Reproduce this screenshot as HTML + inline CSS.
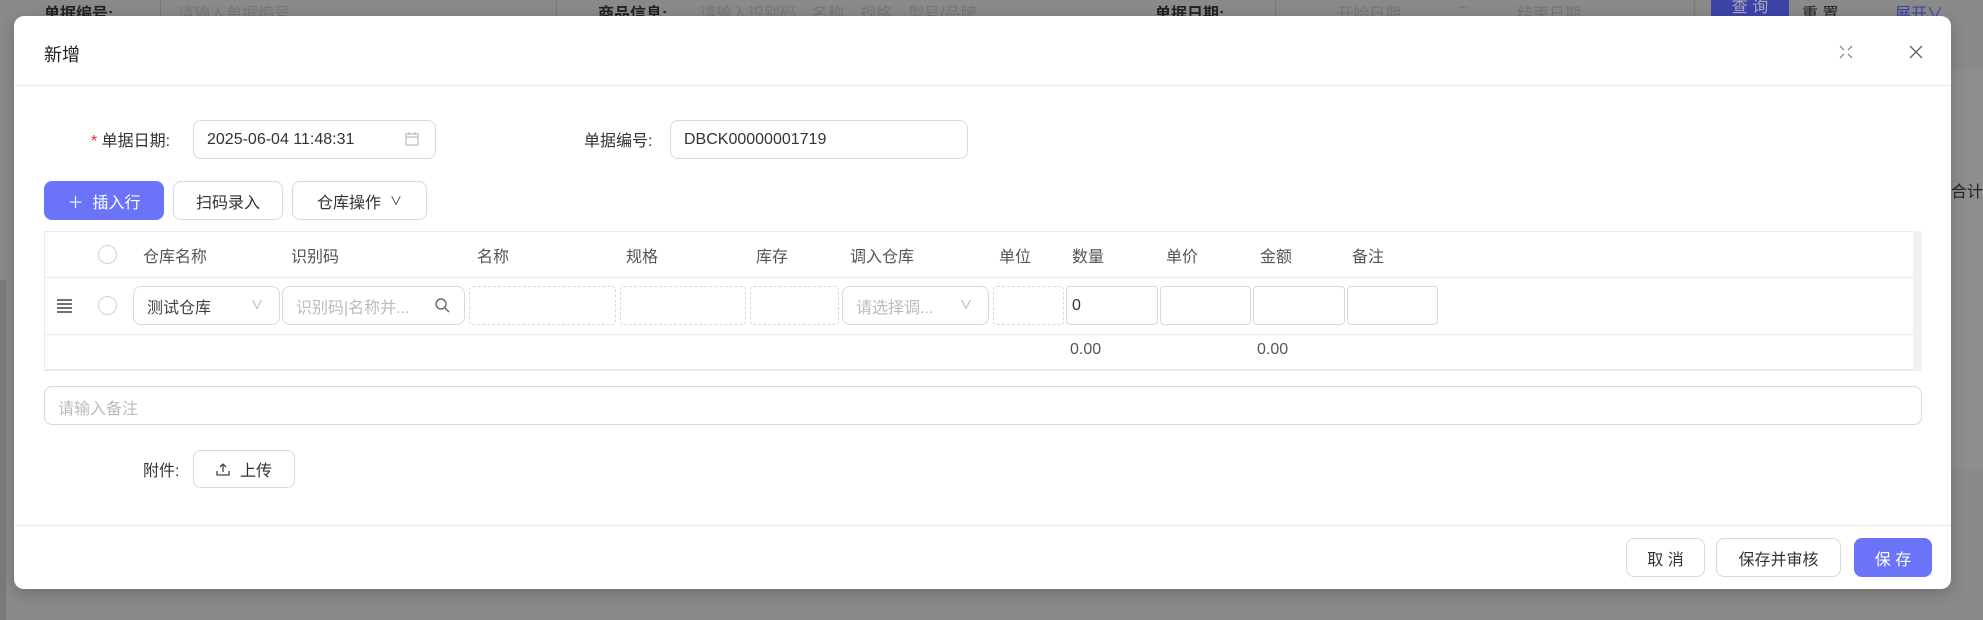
<!DOCTYPE html>
<html><head><meta charset="utf-8"><style>
*{box-sizing:border-box;margin:0;padding:0}
body{width:1983px;height:620px;overflow:hidden;background:#8a8a8a;font-family:"Liberation Sans","Noto Sans CJK SC",sans-serif;font-size:16px;color:#333;position:relative}
.a{position:absolute}
.modal{left:14px;top:16px;width:1937px;height:573px;background:#fff;border-radius:10px;box-shadow:0 4px 16px rgba(0,0,0,.2)}
.inp{position:absolute;border:1px solid #d9d9d9;border-radius:8px;background:#fff;display:flex;align-items:center;padding-left:13px;color:#333}
.dash{position:absolute;border:1px dashed #d9d9d9;border-radius:4px}
.btn{position:absolute;border:1px solid #d9d9d9;border-radius:8px;background:#fff;display:flex;align-items:center;justify-content:center;color:#333}
.pri{background:#6b74f8;border-color:#6b74f8;color:#fff}
.th{position:absolute;top:243px;color:#555}
.circ{position:absolute;width:19px;height:19px;border:1px solid #d0d0d0;border-radius:50%;background:#fff}
.ph{color:#bbb}
</style></head><body>
<div class="a" style="left:44px;top:0;color:#222;font-weight:bold">单据编号:</div>
<div class="a" style="left:160px;top:-6px;width:397px;height:28px;border:1px solid #7a7a7a;border-radius:4px"></div>
<div class="a" style="left:178px;top:0;color:#777">请输入单据编号</div>
<div class="a" style="left:598px;top:0;color:#222;font-weight:bold">商品信息:</div>
<div class="a" style="left:700px;top:0;color:#777">请输入识别码、名称、规格、型号/品牌</div>
<div class="a" style="left:1155px;top:0;color:#222;font-weight:bold">单据日期:</div>
<div class="a" style="left:1275px;top:-6px;width:420px;height:28px;border:1px solid #7a7a7a;border-radius:4px"></div>
<div class="a" style="left:1337px;top:0;color:#777">开始日期</div>
<div class="a" style="left:1458px;top:0;color:#777">~</div>
<div class="a" style="left:1517px;top:0;color:#777">结束日期</div>
<div class="a" style="left:1711px;top:-6px;width:78px;height:28px;background:#3d43a8;border-radius:4px;color:#aab;text-align:center;line-height:28px">查 询</div>
<div class="a" style="left:1802px;top:0;color:#222">重 置</div>
<div class="a" style="left:1895px;top:0;color:#3d43a8">展开∨</div>
<div class="a" style="left:1951px;top:70px;width:32px;height:400px;background:#8e8e8e"></div>
<div class="a" style="left:1951px;top:178px;color:#222">合计</div>
<div class="a" style="left:0;top:280px;width:6px;height:340px;background:#7a7a7a"></div>

<div class="a modal"></div>
<div class="a" style="left:44px;top:41px;font-size:18px;color:#222">新增</div>
<div class="a" style="left:14px;top:85px;width:1937px;height:1px;background:#ebebeb"></div>
<svg class="a" style="left:1838px;top:44px" width="16" height="16" viewBox="0 0 16 16" fill="none" stroke="#888" stroke-width="1.3"><path d="M2 2l4 4M14 2l-4 4M2 14l4-4M14 14l-4-4"/></svg>
<svg class="a" style="left:1908px;top:44px" width="16" height="16" viewBox="0 0 16 16" fill="none" stroke="#666" stroke-width="1.4"><path d="M2 2l12 12M14 2L2 14"/></svg>

<div class="a" style="left:91px;top:127px"><span style="color:#f5222d">*</span> 单据日期:</div>
<div class="inp" style="left:193px;top:120px;width:243px;height:39px">2025-06-04 11:48:31</div>
<svg class="a" style="left:404px;top:131px" width="16" height="16" viewBox="0 0 16 16" fill="none" stroke="#bbb" stroke-width="1.2"><rect x="2" y="3" width="12" height="11"/><path d="M2 6h12M5 1v3M11 1v3"/></svg>
<div class="a" style="left:584px;top:127px">单据编号:</div>
<div class="inp" style="left:670px;top:120px;width:298px;height:39px">DBCK00000001719</div>

<div class="btn pri" style="left:44px;top:181px;width:120px;height:39px">＋&nbsp; 插入行</div>
<div class="btn" style="left:173px;top:181px;width:110px;height:39px">扫码录入</div>
<div class="btn" style="left:292px;top:181px;width:135px;height:39px">仓库操作 &nbsp;<span style="font-size:12px">∨</span></div>

<div class="a" style="left:44px;top:231px;width:1878px;height:140px;border:1px solid #ebebeb"></div>
<div class="a" style="left:1913px;top:231px;width:9px;height:140px;background:#f2f2f2"></div>
<div class="a" style="left:44px;top:277px;width:1869px;height:1px;background:#ebebeb"></div>
<div class="a" style="left:44px;top:334px;width:1869px;height:1px;background:#ebebeb"></div>
<div class="a" style="left:44px;top:369px;width:1869px;height:1px;background:#ebebeb"></div>
<div class="circ" style="left:98px;top:245px"></div>
<div class="th" style="left:143px">仓库名称</div>
<div class="th" style="left:291px">识别码</div>
<div class="th" style="left:477px">名称</div>
<div class="th" style="left:626px">规格</div>
<div class="th" style="left:756px">库存</div>
<div class="th" style="left:850px">调入仓库</div>
<div class="th" style="left:999px">单位</div>
<div class="th" style="left:1072px">数量</div>
<div class="th" style="left:1166px">单价</div>
<div class="th" style="left:1260px">金额</div>
<div class="th" style="left:1352px">备注</div>

<svg class="a" style="left:57px;top:299px" width="15" height="14" viewBox="0 0 15 14" stroke="#444" stroke-width="1.6"><path d="M0 1h15M0 5h15M0 9h15M0 13h15"/></svg>
<div class="circ" style="left:98px;top:296px"></div>
<div class="inp" style="left:133px;top:286px;width:147px;height:39px;color:#444">测试仓库</div>
<div class="a" style="left:251px;top:296px;font-size:12px;color:#aaa">∨</div>
<div class="inp ph" style="left:282px;top:286px;width:183px;height:39px">识别码|名称并...</div>
<svg class="a" style="left:434px;top:297px" width="16" height="16" viewBox="0 0 16 16" fill="none" stroke="#666" stroke-width="1.4"><circle cx="7" cy="7" r="5"/><path d="M11 11l4 4"/></svg>
<div class="dash" style="left:469px;top:286px;width:147px;height:39px"></div>
<div class="dash" style="left:620px;top:286px;width:126px;height:39px"></div>
<div class="dash" style="left:750px;top:286px;width:89px;height:39px"></div>
<div class="inp ph" style="left:842px;top:286px;width:147px;height:39px">请选择调...</div>
<div class="a" style="left:960px;top:296px;font-size:12px;color:#aaa">∨</div>
<div class="dash" style="left:993px;top:286px;width:71px;height:39px"></div>
<div class="inp" style="left:1066px;top:286px;width:92px;height:39px;border-radius:4px;padding-left:5px">0</div>
<div class="inp" style="left:1160px;top:286px;width:91px;height:39px;border-radius:4px"></div>
<div class="inp" style="left:1253px;top:286px;width:92px;height:39px;border-radius:4px"></div>
<div class="inp" style="left:1347px;top:286px;width:91px;height:39px;border-radius:4px"></div>
<div class="a" style="left:1070px;top:341px;color:#555">0.00</div>
<div class="a" style="left:1257px;top:341px;color:#555">0.00</div>

<div class="inp ph" style="left:44px;top:386px;width:1878px;height:39px;align-items:flex-start;padding-top:8px">请输入备注</div>
<div class="a" style="left:143px;top:457px">附件:</div>
<div class="btn" style="left:193px;top:450px;width:102px;height:38px"><svg width="14" height="14" viewBox="0 0 14 14" fill="none" stroke="#444" stroke-width="1.3" style="margin-right:10px"><path d="M7 10V2M4 5l3-3 3 3M1 9v4h12V9"/></svg>上传</div>

<div class="a" style="left:14px;top:525px;width:1937px;height:1px;background:#ebebeb"></div>
<div class="btn" style="left:1626px;top:538px;width:79px;height:39px">取 消</div>
<div class="btn" style="left:1716px;top:538px;width:125px;height:39px">保存并审核</div>
<div class="btn pri" style="left:1854px;top:538px;width:78px;height:39px">保 存</div>
</body></html>
